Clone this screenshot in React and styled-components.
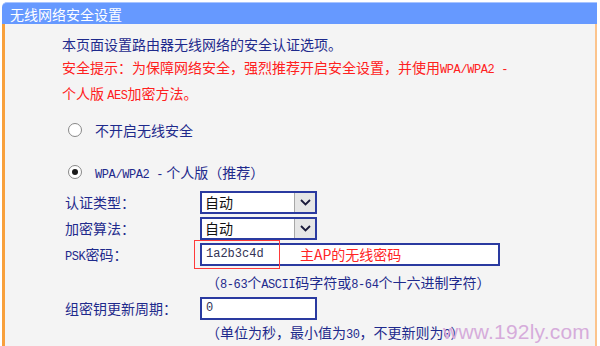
import React from 'react';
import styled, { createGlobalStyle } from 'styled-components';

const Global = createGlobalStyle`
  html, body { margin: 0; padding: 0; background: #ffffff; }
  body { font-family: "Noto Sans CJK SC", "Noto Sans", sans-serif; }
`;

const Panel = styled.div`
  position: relative;
  margin: 2px 0 0 2px;
  width: 595px;
  height: 344px;
  display: flex;
  flex-direction: column;
  overflow: hidden;
`;

const Header = styled.div`
  box-sizing: border-box;
  height: 29px;
  background: #6699ff;
  border-top: 1px solid #a8c4ff;
  border-radius: 5px 0 0 0;
  color: #ffffff;
  font-size: 14px;
  padding: 1px 0 0 8px;
  display: flex;
  align-items: center;
`;

const Body = styled.div`
  flex: 1;
  background: #f4f4f4;
  border-left: 3px solid #f8a03c;
  border-right: 2px solid #fcc48c;
  padding: 9px 0 0 57px;
  display: flex;
  flex-direction: column;
`;

const Line = styled.div`
  font-size: 14px;
  line-height: 23px;
  color: ${p => (p.$red ? '#ff2020' : '#1e2a8c')};
  white-space: nowrap;
`;

const Mono = styled.span`
  font-family: "Liberation Mono", monospace;
  font-size: ${p => p.$size || 12}px;
  letter-spacing: -0.4px;
`;

const RadioRow = styled.div`
  display: flex;
  align-items: center;
  gap: 13px;
  height: 24px;
  margin-top: ${p => p.$mt}px;
  margin-left: 6px;
  font-size: 14px;
  color: #1e2a8c;
  white-space: nowrap;
`;

const RadioCircle = styled.span`
  box-sizing: border-box;
  width: 14px;
  height: 14px;
  border-radius: 50%;
  border: 1px solid #888888;
  background: #ffffff;
  display: flex;
  align-items: center;
  justify-content: center;
  &::after {
    content: '';
    width: 6px;
    height: 6px;
    border-radius: 50%;
    background: ${p => (p.$checked ? '#1a1a1a' : 'transparent')};
  }
`;

const Form = styled.div`
  margin-top: 5px;
  display: flex;
  flex-direction: column;
`;

const FormRow = styled.div`
  display: grid;
  grid-template-columns: 135px auto;
  align-items: center;
  height: 26px;
  margin-left: 3px;
`;

const Label = styled.div`
  font-size: 14px;
  color: #1e2a8c;
  white-space: nowrap;
`;

const Select = styled.div`
  box-sizing: border-box;
  width: 117px;
  height: 23px;
  border: 2px solid #2a3aa0;
  background: #ffffff;
  display: flex;
  align-items: stretch;
`;

const SelectText = styled.div`
  flex: 1;
  font-size: 14px;
  color: #111111;
  padding-left: 3px;
  display: flex;
  align-items: center;
`;

const DropButton = styled.div`
  width: 20px;
  background: #e6e6e6;
  border-left: 1px solid #a8a8a8;
  display: flex;
  align-items: center;
  justify-content: center;
`;

const InputWrap = styled.div`
  position: relative;
  display: flex;
`;

const TextInput = styled.div`
  box-sizing: border-box;
  width: ${p => p.$w}px;
  height: 23px;
  border: 2px solid #2a3aa0;
  background: #ffffff;
  padding-left: 4px;
  display: flex;
  align-items: center;
  font-family: "Liberation Mono", monospace;
  font-size: 12px;
  color: #333355;
`;

const RedBox = styled.div`
  position: absolute;
  left: -6px;
  top: -3px;
  width: 84px;
  height: 27px;
  border: 1px solid #ff3a3a;
  pointer-events: none;
`;

const Note = styled.div`
  position: absolute;
  left: 100px;
  top: 0;
  height: 23px;
  display: flex;
  align-items: center;
  font-size: 14px;
  color: #ff2424;
  white-space: nowrap;
`;

const Hint = styled.div`
  padding-left: 144px;
  padding-top: ${p => p.$pt || 0}px;
  font-size: 14px;
  line-height: ${p => p.$lh}px;
  color: #1e2a8c;
  white-space: nowrap;
`;

const Watermark = styled.div`
  position: absolute;
  right: 7px;
  bottom: 2px;
  font-family: "Liberation Sans", Arial, sans-serif;
  font-size: 21px;
  color: #d6acdb;
  letter-spacing: 0.2px;
`;

const Chevron = () => (
  <svg width="11" height="7" viewBox="0 0 11 7">
    <path d="M1 1 L5.5 5.5 L10 1" fill="none" stroke="#1a1a3a" strokeWidth="1.8" />
  </svg>
);

const Dropdown = ({ value }) => (
  <Select>
    <SelectText>{value}</SelectText>
    <DropButton><Chevron /></DropButton>
  </Select>
);

export default function App() {
  return (
    <>
      <Global />
      <Panel>
        <Header>无线网络安全设置</Header>
        <Body>
          <Line>本页面设置路由器无线网络的安全认证选项。</Line>
          <Line $red>
            安全提示：为保障网络安全，强烈推荐开启安全设置，并使用<Mono>WPA/WPA2 -</Mono>
          </Line>
          <Line $red>个人版 <Mono>AES</Mono>加密方法。</Line>

          <RadioRow $mt={10}>
            <RadioCircle />
            <span>不开启无线安全</span>
          </RadioRow>
          <RadioRow $mt={18}>
            <RadioCircle $checked />
            <span><Mono>WPA/WPA2 -</Mono> 个人版（推荐）</span>
          </RadioRow>

          <Form>
            <FormRow>
              <Label>认证类型：</Label>
              <Dropdown value="自动" />
            </FormRow>
            <FormRow>
              <Label>加密算法：</Label>
              <Dropdown value="自动" />
            </FormRow>
            <FormRow>
              <Label><Mono>PSK</Mono>密码：</Label>
              <InputWrap>
                <TextInput $w={300}>1a2b3c4d</TextInput>
                <RedBox />
                <Note>主AP的无线密码</Note>
              </InputWrap>
            </FormRow>
            <Hint $pt={5} $lh={20}>
              （<Mono>8-63</Mono>个<Mono>ASCII</Mono>码字符或<Mono>8-64</Mono>个十六进制字符）
            </Hint>
            <FormRow>
              <Label>组密钥更新周期：</Label>
              <InputWrap>
                <TextInput $w={117}>0</TextInput>
              </InputWrap>
            </FormRow>
            <Hint $lh={22}>
              （单位为秒，最小值为<Mono>30</Mono>，不更新则为<Mono>0</Mono>）
            </Hint>
          </Form>
        </Body>
        <Watermark>www.192ly.com</Watermark>
      </Panel>
    </>
  );
}
